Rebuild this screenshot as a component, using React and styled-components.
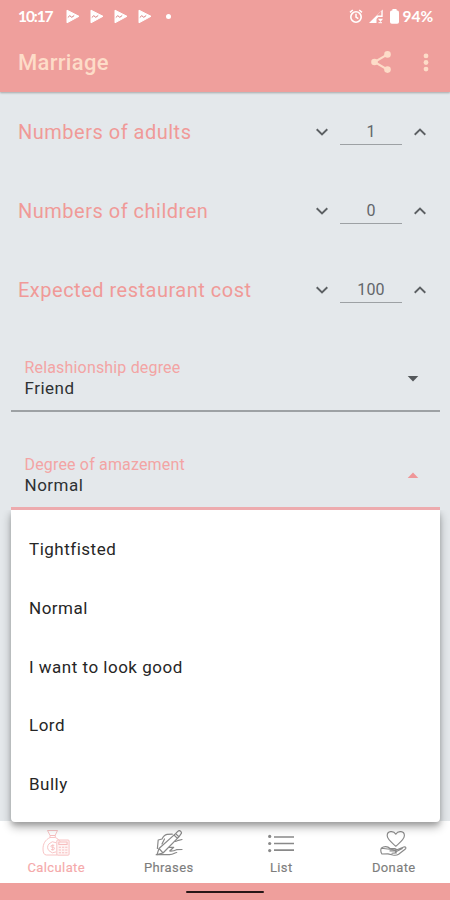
import React from "react";
import styled, { createGlobalStyle } from "styled-components";

const coral = "#ef9f9c";
const cream = "#fddcc8";

const GlobalStyle = createGlobalStyle`
  * { box-sizing: border-box; }
  body { margin: 0; background: #e4e8eb; font-family: Roboto, sans-serif; }
`;

const Screen = styled.div`
  width: 450px;
  height: 900px;
  display: flex;
  flex-direction: column;
  overflow: hidden;
  background: #e4e8eb;
`;

const Header = styled.header`
  height: 92px;
  flex: none;
  background: ${coral};
  box-shadow: 0 1px 2px rgba(0, 0, 0, 0.28);
`;

const StatusBar = styled.div`
  height: 32px;
  display: flex;
  justify-content: space-between;
  padding: 0 17px 0 18px;
  color: #fff;
  font: 700 15.5px/32px Lato, sans-serif;
`;

const StatusGroup = styled.div`
  display: flex;
  align-items: center;
  gap: ${(p) => p.$gap}px;
  svg { display: block; flex: none; }
`;

const Clock = styled.span`
  width: 38px;
  letter-spacing: -1.1px;
`;

const Battery = styled.span`
  margin-left: -2px;
  letter-spacing: -0.1px;
`;

const Dot = styled.span`
  width: 5px;
  height: 5px;
  margin-left: 4px;
  border-radius: 50%;
  background: #fff;
`;

const AppBar = styled.div`
  height: 60px;
  display: flex;
  align-items: center;
  padding: 0 21px 0 18px;
`;

const Title = styled.h1`
  flex: 1;
  margin: 0;
  padding-top: 2px;
  color: ${cream};
  font-size: 22px;
  font-weight: 500;
  line-height: 28px;
  letter-spacing: 0.3px;
`;

const Actions = styled.div`
  display: flex;
  align-items: center;
  gap: 32px;
  svg { display: block; }
`;

const Content = styled.main`
  height: 729px;
  flex: none;
  position: relative;
  z-index: 1;
`;

const NumberRow = styled.div`
  height: 79px;
  display: flex;
  align-items: center;
  padding: 0 24px 0 18px;
`;

const RowLabel = styled.span`
  flex: 1;
  color: #f09a98;
  font-size: 20px;
  line-height: 24px;
  letter-spacing: 0.5px;
`;

const Stepper = styled.div`
  display: flex;
  align-items: center;
  gap: 12px;
  svg { display: block; }
`;

const NumberValue = styled.div`
  width: 62px;
  height: 26px;
  border-bottom: 1.5px solid #9da1a4;
  color: #62666a;
  font-size: 16px;
  line-height: 26px;
  text-align: center;
  letter-spacing: 0.1px;
`;

const Select = styled.div`
  position: relative;
  display: flex;
  align-items: center;
  height: ${(p) => (p.$open ? 64 : 63)}px;
  margin: ${(p) => (p.$open ? 34 : 20)}px 10px 0 11px;
  padding: 0 21px 0 13.5px;
  border-bottom: ${(p) => (p.$open ? "3px solid #edabae" : "2px solid #9da1a4")};
  svg { display: block; margin-bottom: ${(p) => (p.$open ? 3 : 1)}px; }
`;

const SelectText = styled.div`
  flex: 1;
  display: flex;
  flex-direction: column;
  padding-bottom: 4px;
`;

const SelectLabel = styled.span`
  color: #f3a4a4;
  font-size: 16px;
  line-height: 20px;
  letter-spacing: 0.17px;
`;

const SelectValue = styled.span`
  color: #2e3133;
  font-size: 17px;
  line-height: 20px;
  letter-spacing: 0.5px;
`;

const Menu = styled.ul`
  position: absolute;
  top: 100%;
  left: 0;
  right: 0;
  height: 312px;
  margin: 3px 0 0;
  padding: 10px 18px 0 18px;
  list-style: none;
  background: #fff;
  border-radius: 0 0 4px 4px;
  box-shadow: 0 5px 10px rgba(0, 0, 0, 0.32), 0 3px 4px rgba(0, 0, 0, 0.12);
  clip-path: inset(0 -20px -24px -20px);
`;

const Option = styled.li`
  height: 58.8px;
  color: #262626;
  font-size: 17px;
  line-height: 58.8px;
  letter-spacing: 0.5px;
`;

const BottomNav = styled.nav`
  height: 62px;
  flex: none;
  display: grid;
  grid-template-columns: repeat(4, 1fr);
  background: #fff;
`;

const NavItem = styled.div`
  display: flex;
  flex-direction: column;
  align-items: center;
  padding-top: 8px;
  color: ${(p) => (p.$active ? "#f5a9aa" : "#7d7d7d")};
  font-size: 13px;
  line-height: 18px;
  letter-spacing: 0.4px;
  -webkit-text-stroke: 0.15px currentColor;
  svg { display: block; margin-bottom: 2px; opacity: ${(p) => (p.$active ? 0.75 : 0.9)}; }
`;

const GestureBar = styled.footer`
  flex: 1;
  display: flex;
  justify-content: center;
  padding-top: 8px;
  background: ${coral};
`;

const Handle = styled.div`
  width: 78px;
  height: 2px;
  border-radius: 1px;
  background: #261716;
`;

const PlayIcon = () => (
  <svg width="14" height="15" viewBox="0 0 14 15">
    <path d="M1 1.2 13 7.3 1 13.8z" fill="#fff" stroke="#fff" strokeLinejoin="round" />
    <path d="M1.8 8.5 3.8 6.7 5.8 8.3 8.2 6.5" fill="none" stroke="#d97f80" strokeWidth="1" />
  </svg>
);

const AlarmIcon = () => (
  <svg width="14" height="15" viewBox="0 0 14 15" fill="none" stroke="#fff">
    <circle cx="7" cy="8" r="5.2" strokeWidth="1.6" />
    <path d="M7 4.8v3.4l2.3 1.5M1 3.3 3.8 1M13 3.3 10.2 1" strokeWidth="1.5" />
  </svg>
);

const SignalIcon = () => (
  <svg width="15" height="15" viewBox="0 0 15 15">
    <path d="M0 14 13.7.5V8H9.2L7.5 10V14z" fill="#fff" />
    <path d="M8.3 6.1 12.3 2.1V6.5H8.3z" fill={coral} />
    <path d="M9 9.7h5L11.5 13z" fill="#fff" />
    <path d="M9.5 13.7h3.5" stroke="#fff" />
  </svg>
);

const BatteryIcon = () => (
  <svg width="9" height="15" viewBox="0 0 9 15" fill="#fff">
    <rect x="2.3" width="4.4" height="3" rx=".7" />
    <rect y="1.4" width="9" height="13.4" rx="1.8" />
  </svg>
);

const ShareIcon = () => (
  <svg width="20" height="22" viewBox="0 0 20 22" fill={cream}>
    <path d="M16.5 3.3 3.5 11l13 7.7" fill="none" stroke={cream} strokeWidth="2.1" />
    <circle cx="16.5" cy="3.4" r="3.3" />
    <circle cx="3.5" cy="11" r="3.3" />
    <circle cx="16.5" cy="18.6" r="3.3" />
  </svg>
);

const MoreIcon = () => (
  <svg width="6" height="19" viewBox="0 0 6 19" fill={cream}>
    <circle cx="3" cy="2.9" r="2.4" />
    <circle cx="3" cy="9.5" r="2.4" />
    <circle cx="3" cy="16.1" r="2.4" />
  </svg>
);

const Chevron = ({ up }) => (
  <svg width="12" height="8" viewBox="0 0 12 8" fill="none" stroke="#5c6063" strokeWidth="1.9">
    <path d={up ? "M.7 6.8 6 1.6l5.3 5.2" : "M.7 1.2 6 6.4l5.3-5.2"} />
  </svg>
);

const Caret = ({ up }) => (
  <svg width="12" height="6" viewBox="0 0 12 6">
    {up ? <path d="M.7 6 6 .5 11.3 6z" fill="#ef9698" /> : <path d="M.7 0 6 5.5 11.3 0z" fill="#54585b" />}
  </svg>
);

const MoneyIcon = () => (
  <svg width="28" height="28" viewBox="0 0 28 28" fill="none" stroke="currentColor" strokeWidth=".9" strokeLinejoin="round">
    <path d="M5.5 1.5h10l-2.4 5h-5zM8 6.5h5.3v2H8zM8 8.5C3 11 1 15 1 20c0 3 .8 6 3.3 6H15M13.3 8.5c2.4 1.2 4 2.6 4.8 4" />
    <path d="M14 13.7a5.4 5.4 0 1 0 0 9.2M10.8 15.5v6.2M12.3 16.3h-2.2c-1.6 0-1.6 2 0 2h1.2c1.7 0 1.7 2.3 0 2.3H9" />
    <rect x="14.8" y="11" width="12.3" height="15.2" rx="1" fill="currentColor" fillOpacity=".15" />
    <path d="M16.8 13h8.3v2.5h-8.3zM16.8 18.2h2.2M20 18.2h2.2M23.2 18.2h2.2M16.8 21h2.2M20 21h2.2M23.2 21h2.2M16.8 23.8h2.2M20 23.8h2.2M23.2 23.8h2.2" strokeWidth="1.1" />
  </svg>
);

const WriteIcon = () => (
  <svg width="28" height="28" viewBox="0 0 28 28" fill="none" stroke="currentColor" strokeWidth="1.2" strokeLinejoin="round" strokeLinecap="round">
    <path d="m2 25.6 2-6.1L20.6 4.6l3.3 3.2L8 24zM4 19.5l4 4.4M19 6l3.4 3.4M20.6 4.6l2.2-2.2c2-1.8 4.8.8 3 2.8l-1.9 2.6" />
    <path d="M17.3 5.2 12 5.4c-2.5.3-3.8 2.2-5 4.6L3.2 11l-.8 8.5M7 15l2.5-5M20.5 12.5l3-1.2 3.5-.8M14.2 18.3h4.5l-4 3.7c2.6.2 4.7-.2 6.8-1.3l5.5-.2M1.2 25.7h13.3c4.3 0 5.2-2.2 7.2-2.2" />
  </svg>
);

const ListIcon = () => (
  <svg width="28" height="28" viewBox="0 0 28 28" stroke="currentColor" fill="currentColor">
    <path d="M7 8h20M7 14.5h20M7 21.2h20" strokeWidth="1.7" />
    <g stroke="none">
      <circle cx="2.7" cy="7.4" r="1.6" />
      <circle cx="2.7" cy="14.5" r="1.6" />
      <circle cx="2.7" cy="21.6" r="1.6" />
    </g>
  </svg>
);

const DonateIcon = () => (
  <svg width="28" height="28" viewBox="0 0 28 28" fill="none" stroke="currentColor" strokeWidth="1.15" strokeLinejoin="round" strokeLinecap="round">
    <path d="M15.8 17.2C11.7 13.6 7.2 10.5 7.2 6.6c0-4.8 6.4-5.2 8.6-1.4 2.2-3.8 8.6-3.4 8.6 1.4 0 3.9-4.5 7-8.6 10.6z" />
    <path d="M1.3 19.2c2.5-2.2 6.3-2.1 8.7.3h4.8c2 0 2 2.4 0 2.4H10M16.3 21l7.5-3c2-.6 2.8 1 1.3 2.2l-6.5 5c-1.6 1.1-3.6 1.2-5.7.8l-5-1.1-6 .1C.6 23 .5 21 1.3 19.2zM15.5 23l6.8-3.4M12 24.2l4.3-.3" />
  </svg>
);

const numbers = [
  ["Numbers of adults", 1],
  ["Numbers of children", 0],
  ["Expected restaurant cost", 100],
];

const options = ["Tightfisted", "Normal", "I want to look good", "Lord", "Bully"];

const tabs = [
  ["Calculate", MoneyIcon],
  ["Phrases", WriteIcon],
  ["List", ListIcon],
  ["Donate", DonateIcon],
];

export default function App() {
  return (
    <Screen>
      <GlobalStyle />
      <Header>
        <StatusBar>
          <StatusGroup $gap={10}>
            <Clock>10:17</Clock>
            <PlayIcon />
            <PlayIcon />
            <PlayIcon />
            <PlayIcon />
            <Dot />
          </StatusGroup>
          <StatusGroup $gap={6}>
            <AlarmIcon />
            <SignalIcon />
            <BatteryIcon />
            <Battery>94%</Battery>
          </StatusGroup>
        </StatusBar>
        <AppBar>
          <Title>Marriage</Title>
          <Actions>
            <ShareIcon />
            <MoreIcon />
          </Actions>
        </AppBar>
      </Header>
      <Content>
        {numbers.map(([label, value]) => (
          <NumberRow key={label}>
            <RowLabel>{label}</RowLabel>
            <Stepper>
              <Chevron />
              <NumberValue>{value}</NumberValue>
              <Chevron up />
            </Stepper>
          </NumberRow>
        ))}
        <Select>
          <SelectText>
            <SelectLabel>Relashionship degree</SelectLabel>
            <SelectValue>Friend</SelectValue>
          </SelectText>
          <Caret />
        </Select>
        <Select $open>
          <SelectText>
            <SelectLabel>Degree of amazement</SelectLabel>
            <SelectValue>Normal</SelectValue>
          </SelectText>
          <Caret up />
          <Menu>
            {options.map((option) => (
              <Option key={option}>{option}</Option>
            ))}
          </Menu>
        </Select>
      </Content>
      <BottomNav>
        {tabs.map(([label, Icon], i) => (
          <NavItem key={label} $active={i === 0}>
            <Icon />
            {label}
          </NavItem>
        ))}
      </BottomNav>
      <GestureBar>
        <Handle />
      </GestureBar>
    </Screen>
  );
}
